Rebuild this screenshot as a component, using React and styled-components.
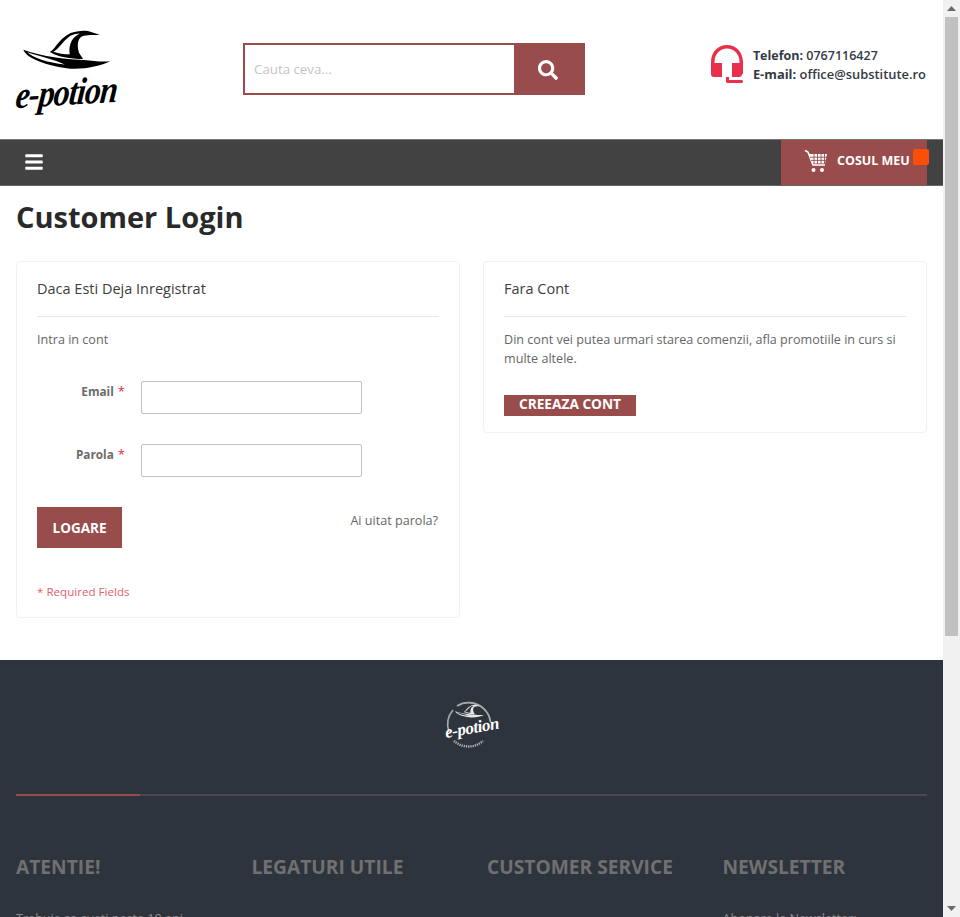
import React from "react";
import styled, { createGlobalStyle } from "styled-components";
import { FaBars, FaSearch } from "react-icons/fa";

const Global = createGlobalStyle`
  body { margin: 0; background: #fff; font-family: "Open Sans", "Noto Sans", sans-serif; font-size: 12.6px; color: #666; }
  * { box-sizing: border-box; }
`;

const Shell = styled.div`
  display: flex;
  height: 100vh;
  overflow: hidden;
`;
const Page = styled.div`
  flex: 1;
  min-width: 0;
  overflow-y: auto;
  scrollbar-width: none;
`;
const ScrollBar = styled.div`
  display: flex;
  flex-direction: column;
  flex: none;
  width: 17px;
  background: #f1f1f1;
`;
const ScrollArrow = styled.div`
  display: flex;
  align-items: center;
  justify-content: center;
  height: 17px;
  flex: none;
`;
const ScrollThumb = styled.div`
  height: 619px;
  margin: 0 2px;
  background: #c1c1c1;
`;
const ScrollRest = styled.div`
  flex: 1;
`;
const Header = styled.header`
  display: flex;
  height: 139px;
  padding: 30px 17px 0 16px;
`;
const Logo = styled.a`
  display: flex;
  flex-direction: column;
  width: 104px;
  height: 85px;
  color: #000;
`;
const LogoText = styled.span`
  display: block;
  margin-top: 4px;
  font: italic 700 32px/38px "Liberation Serif", serif;
  letter-spacing: -1px;
  white-space: nowrap;
  transform: skewX(-8deg) scaleY(1.2) rotate(-3deg);
  transform-origin: left center;
`;
const Search = styled.form`
  display: flex;
  width: 342px;
  height: 52px;
  margin: 13px 0 0 123px;
  border: 2px solid #994c4c;
  background: #994c4c;
`;
const SearchInput = styled.input`
  flex: 1;
  min-width: 0;
  border: 0;
  outline: 0;
  padding: 0 9px;
  background: #fff;
  font: 13.3px "Open Sans", sans-serif;
  &::placeholder { color: #c4c4c4; opacity: 1; }
`;
const SearchButton = styled.button`
  display: flex;
  align-items: center;
  justify-content: center;
  width: 69px;
  border: 0;
  background: #994c4c;
  color: #fff;
  font-size: 20px;
  padding: 1px 2px 0 0;
`;
const Contact = styled.div`
  display: flex;
  gap: 9px;
  margin: 15px 0 0 auto;
`;
const ContactText = styled.div`
  padding-top: 1px;
  color: #333a44;
  font-weight: 600;
  line-height: 19px;
  white-space: nowrap;
  b { font-weight: 700; }
`;
const ContactLine = styled.div`
  font-size: ${(p) => p.$size}px;
`;
const Nav = styled.nav`
  display: flex;
  justify-content: space-between;
  height: 47px;
  padding-right: 16px;
  background: #424242;
  border-top: 1px solid #777;
  border-bottom: 1px solid #666;
`;
const Burger = styled.button`
  display: flex;
  align-items: center;
  padding: 0 0 1px 24px;
  border: 0;
  background: none;
  color: #fff;
  font-size: 20px;
`;
const Cart = styled.a`
  position: relative;
  display: flex;
  align-items: center;
  width: 146px;
  padding: 0 0 4px 23px;
  gap: 9px;
  background: #994c4c;
  color: #fff;
  font-size: 12.5px;
  font-weight: 700;
  white-space: nowrap;
`;
const Badge = styled.span`
  position: absolute;
  top: 9px;
  right: -2px;
  width: 16px;
  height: 16px;
  border-radius: 2px;
  background: #fa4e09;
`;
const Main = styled.main`
  padding: 14px 16px 42px;
`;
const Title = styled.h1`
  margin: 0 0 27px;
  color: #292929;
  font-size: 29px;
  font-weight: 700;
  line-height: 34px;
`;
const Columns = styled.div`
  display: grid;
  grid-template-columns: 1fr 1fr;
  gap: 23px;
  align-items: start;
`;
const Card = styled.section`
  padding: 17px 20px 16px;
  border: 1px solid #f1f1f1;
  border-radius: 4px;
`;
const CardTitle = styled.h2`
  margin: 0;
  padding-bottom: 17px;
  border-bottom: 1px solid #e8e8e8;
  color: #3d3d3d;
  font-size: 14.5px;
  font-weight: 400;
  line-height: 20px;
`;
const Text = styled.p`
  margin: 13px 0 0;
  line-height: 19px;
`;
const Fields = styled.div`
  display: grid;
  gap: 30px;
  margin-top: 32px;
`;
const Field = styled.label`
  display: grid;
  grid-template-columns: 88px 221px;
  column-gap: 16px;
  font-size: 11.8px;
  font-weight: 700;
  line-height: 21px;
  color: #6b6b6b;
`;
const FieldName = styled.span`
  text-align: right;
  i { margin-left: 4px; font-style: normal; font-weight: 400; font-size: 13px; color: #e02b45; }
`;
const Input = styled.input`
  height: 33px;
  border: 1px solid #c2c2c2;
  border-radius: 2px;
  background: #fff;
`;
const Actions = styled.div`
  display: flex;
  justify-content: space-between;
  margin-top: 30px;
`;
const LoginButton = styled.button`
  width: 85px;
  height: 41px;
  border: 0;
  background: #994c4c;
  color: #fff;
  font: 700 13.5px "Open Sans", sans-serif;
  padding: 0;
`;
const Forgot = styled.a`
  margin-right: 1px;
  line-height: 28px;
  color: #666;
`;
const Required = styled.p`
  margin: 34px 0 0;
  color: #e4606d;
  font-size: 11.6px;
  line-height: 19px;
`;
const CreateButton = styled.button`
  display: block;
  width: 132px;
  height: 21px;
  margin-top: 27px;
  padding: 0 0 3px;
  border: 0;
  background: #994c4c;
  color: #fff;
  font: 700 13.7px/18px "Open Sans", sans-serif;
`;
const Footer = styled.footer`
  min-height: 650px;
  padding: 40px 16px 0;
  background: #2e343d;
  color: #8a8a8a;
`;
const FooterLogo = styled.div`
  display: flex;
  justify-content: center;
  height: 54px;
  margin-left: -1px;
`;
const Rule = styled.div`
  height: 2px;
  margin-top: 40px;
  background: linear-gradient(to right, #994c4c 124px, #4a4a4c 124px);
`;
const FooterGrid = styled.div`
  display: grid;
  grid-template-columns: repeat(4, 1fr);
  gap: 31px;
  margin-top: 58px;
`;
const FooterTitle = styled.h3`
  margin: 0 0 29px;
  color: #707070;
  font-size: 19.2px;
  font-weight: 700;
  line-height: 26px;
  white-space: nowrap;
`;
const FooterText = styled.p`
  margin: 0;
  line-height: 19px;
`;

const HatPaths = ({ main, accent }) => (
  <>
    <path fill={main} d="M70 90C80 115 130 135 200 146C245 152 300 140 332 125C300 128 270 122 240 120C200 118 130 112 70 90Z" />
    <path fill={accent} d="M82 98C100 115 140 128 195 135C170 122 125 112 82 98Z" />
    <path fill={main} d="M150 97C168 88 172 62 212 40C232 32 262 30 274 37L300 45C282 47 262 44 246 50C232 58 232 80 238 100L250 118C210 118 175 112 150 97Z" />
    <path fill={accent} d="M160 96C176 90 184 68 212 48C222 43 232 41 240 41C226 48 216 58 212 72C208 84 208 94 210 104C192 104 174 101 160 96Z" />
  </>
);
const HeaderHat = () => (
  <svg width="93" height="44" viewBox="60 25 280 132" style={{ marginLeft: 4, marginTop: -2, flex: "none" }} aria-hidden="true">
    <HatPaths main="#000" accent="#fff" />
  </svg>
);
const HeadsetIcon = () => (
  <svg width="33" height="38" viewBox="0 0 33 38" fill="#e8304a" aria-hidden="true">
    <path d="M0 29V17C0 7 7 0 16 0S32 7 32 17V29H28.5V17C28.5 9 23 3.5 16 3.5S3.5 9 3.5 17V29Z" />
    <path d="M1 18H11V32H3C1 32 0 31 0 29ZM21 18H31V29C31 31 30 32 28 32H21Z" />
    <rect x="15" y="35" width="17" height="3" rx="1.5" />
    <rect x="15" y="32" width="3" height="5" />
  </svg>
);
const CartIcon = () => (
  <svg width="24" height="24" viewBox="0 0 24 24" fill="none" stroke="#fff" aria-hidden="true">
    <path d="M1 1.5L4 3L9 16H21" strokeWidth="1.6" />
    <path d="M5 5H23L21 14.5H8.5Z" fill="#fff" stroke="none" />
    <path d="M10 5V15M13.5 5V15M17 5V15M20.5 5V15M6 8.2H23M7 11.4H22" stroke="#994c4c" strokeWidth="0.9" />
    <circle cx="9.5" cy="21" r="2" fill="#fff" stroke="none" />
    <circle cx="18" cy="21" r="2" fill="#fff" stroke="none" />
  </svg>
);
const FooterBadge = () => (
  <svg width="56" height="54" viewBox="0 0 56 54" aria-hidden="true">
    <path d="M10 10A22 22 0 0 0 6 32" fill="none" stroke="#a8a8a8" strokeWidth="1.8" />
    <path d="M14 6A22 22 0 0 1 40 8A22 22 0 0 1 47.5 22" fill="none" stroke="#a8a8a8" strokeWidth="1.8" />
    <g transform="translate(11 4) scale(.11) translate(-60 -25)">
      <HatPaths main="#e8e8e8" accent="#2e343d" />
    </g>
    <path d="M11 41A22 22 0 0 0 40 41" fill="none" stroke="#bbb" strokeWidth="2.4" strokeDasharray="1.2 1" />
    <text x="3" y="38" transform="rotate(-10 3 38)" fill="#fff" fontFamily="Liberation Serif" fontStyle="italic" fontWeight="700" fontSize="17" letterSpacing="-0.4">e-potion</text>
  </svg>
);
const ArrowIcon = ({ down }) => (
  <svg width="9" height="5" viewBox="0 0 9 5" fill="#6a6a6a" aria-hidden="true">
    <path d={down ? "M0 0H9L4.5 5Z" : "M0 5H9L4.5 0Z"} />
  </svg>
);

export default function App() {
  return (
    <Shell>
      <Global />
      <Page>
        <Header>
          <Logo>
            <HeaderHat />
            <LogoText>e-potion</LogoText>
          </Logo>
          <Search onSubmit={(e) => e.preventDefault()}>
            <SearchInput placeholder="Cauta ceva..." />
            <SearchButton aria-label="Cauta"><FaSearch /></SearchButton>
          </Search>
          <Contact>
            <HeadsetIcon />
            <ContactText>
              <ContactLine $size={12.5}><b>Telefon:</b> 0767116427</ContactLine>
              <ContactLine $size={12.9}><b>E-mail:</b> office@substitute.ro</ContactLine>
            </ContactText>
          </Contact>
        </Header>
        <Nav>
          <Burger aria-label="Meniu"><FaBars /></Burger>
          <Cart>
            <CartIcon />
            COSUL MEU
            <Badge />
          </Cart>
        </Nav>
        <Main>
          <Title>Customer Login</Title>
          <Columns>
            <Card>
              <CardTitle>Daca Esti Deja Inregistrat</CardTitle>
              <Text>Intra in cont</Text>
              <Fields>
                <Field>
                  <FieldName>Email<i>*</i></FieldName>
                  <Input type="email" />
                </Field>
                <Field>
                  <FieldName>Parola<i>*</i></FieldName>
                  <Input type="password" />
                </Field>
              </Fields>
              <Actions>
                <LoginButton>LOGARE</LoginButton>
                <Forgot>Ai uitat parola?</Forgot>
              </Actions>
              <Required>* Required Fields</Required>
            </Card>
            <Card>
              <CardTitle>Fara Cont</CardTitle>
              <Text>Din cont vei putea urmari starea comenzii, afla promotiile in curs si multe altele.</Text>
              <CreateButton>CREEAZA CONT</CreateButton>
            </Card>
          </Columns>
        </Main>
        <Footer>
          <FooterLogo><FooterBadge /></FooterLogo>
          <Rule />
          <FooterGrid>
            <div>
              <FooterTitle>ATENTIE!</FooterTitle>
              <FooterText>Trebuie sa aveti peste 18 ani</FooterText>
            </div>
            <div><FooterTitle>LEGATURI UTILE</FooterTitle></div>
            <div><FooterTitle>CUSTOMER SERVICE</FooterTitle></div>
            <div>
              <FooterTitle>NEWSLETTER</FooterTitle>
              <FooterText>Abonare la Newsletter:</FooterText>
            </div>
          </FooterGrid>
        </Footer>
      </Page>
      <ScrollBar aria-hidden="true">
        <ScrollArrow><ArrowIcon /></ScrollArrow>
        <ScrollThumb />
        <ScrollRest />
        <ScrollArrow><ArrowIcon down /></ScrollArrow>
      </ScrollBar>
    </Shell>
  );
}
